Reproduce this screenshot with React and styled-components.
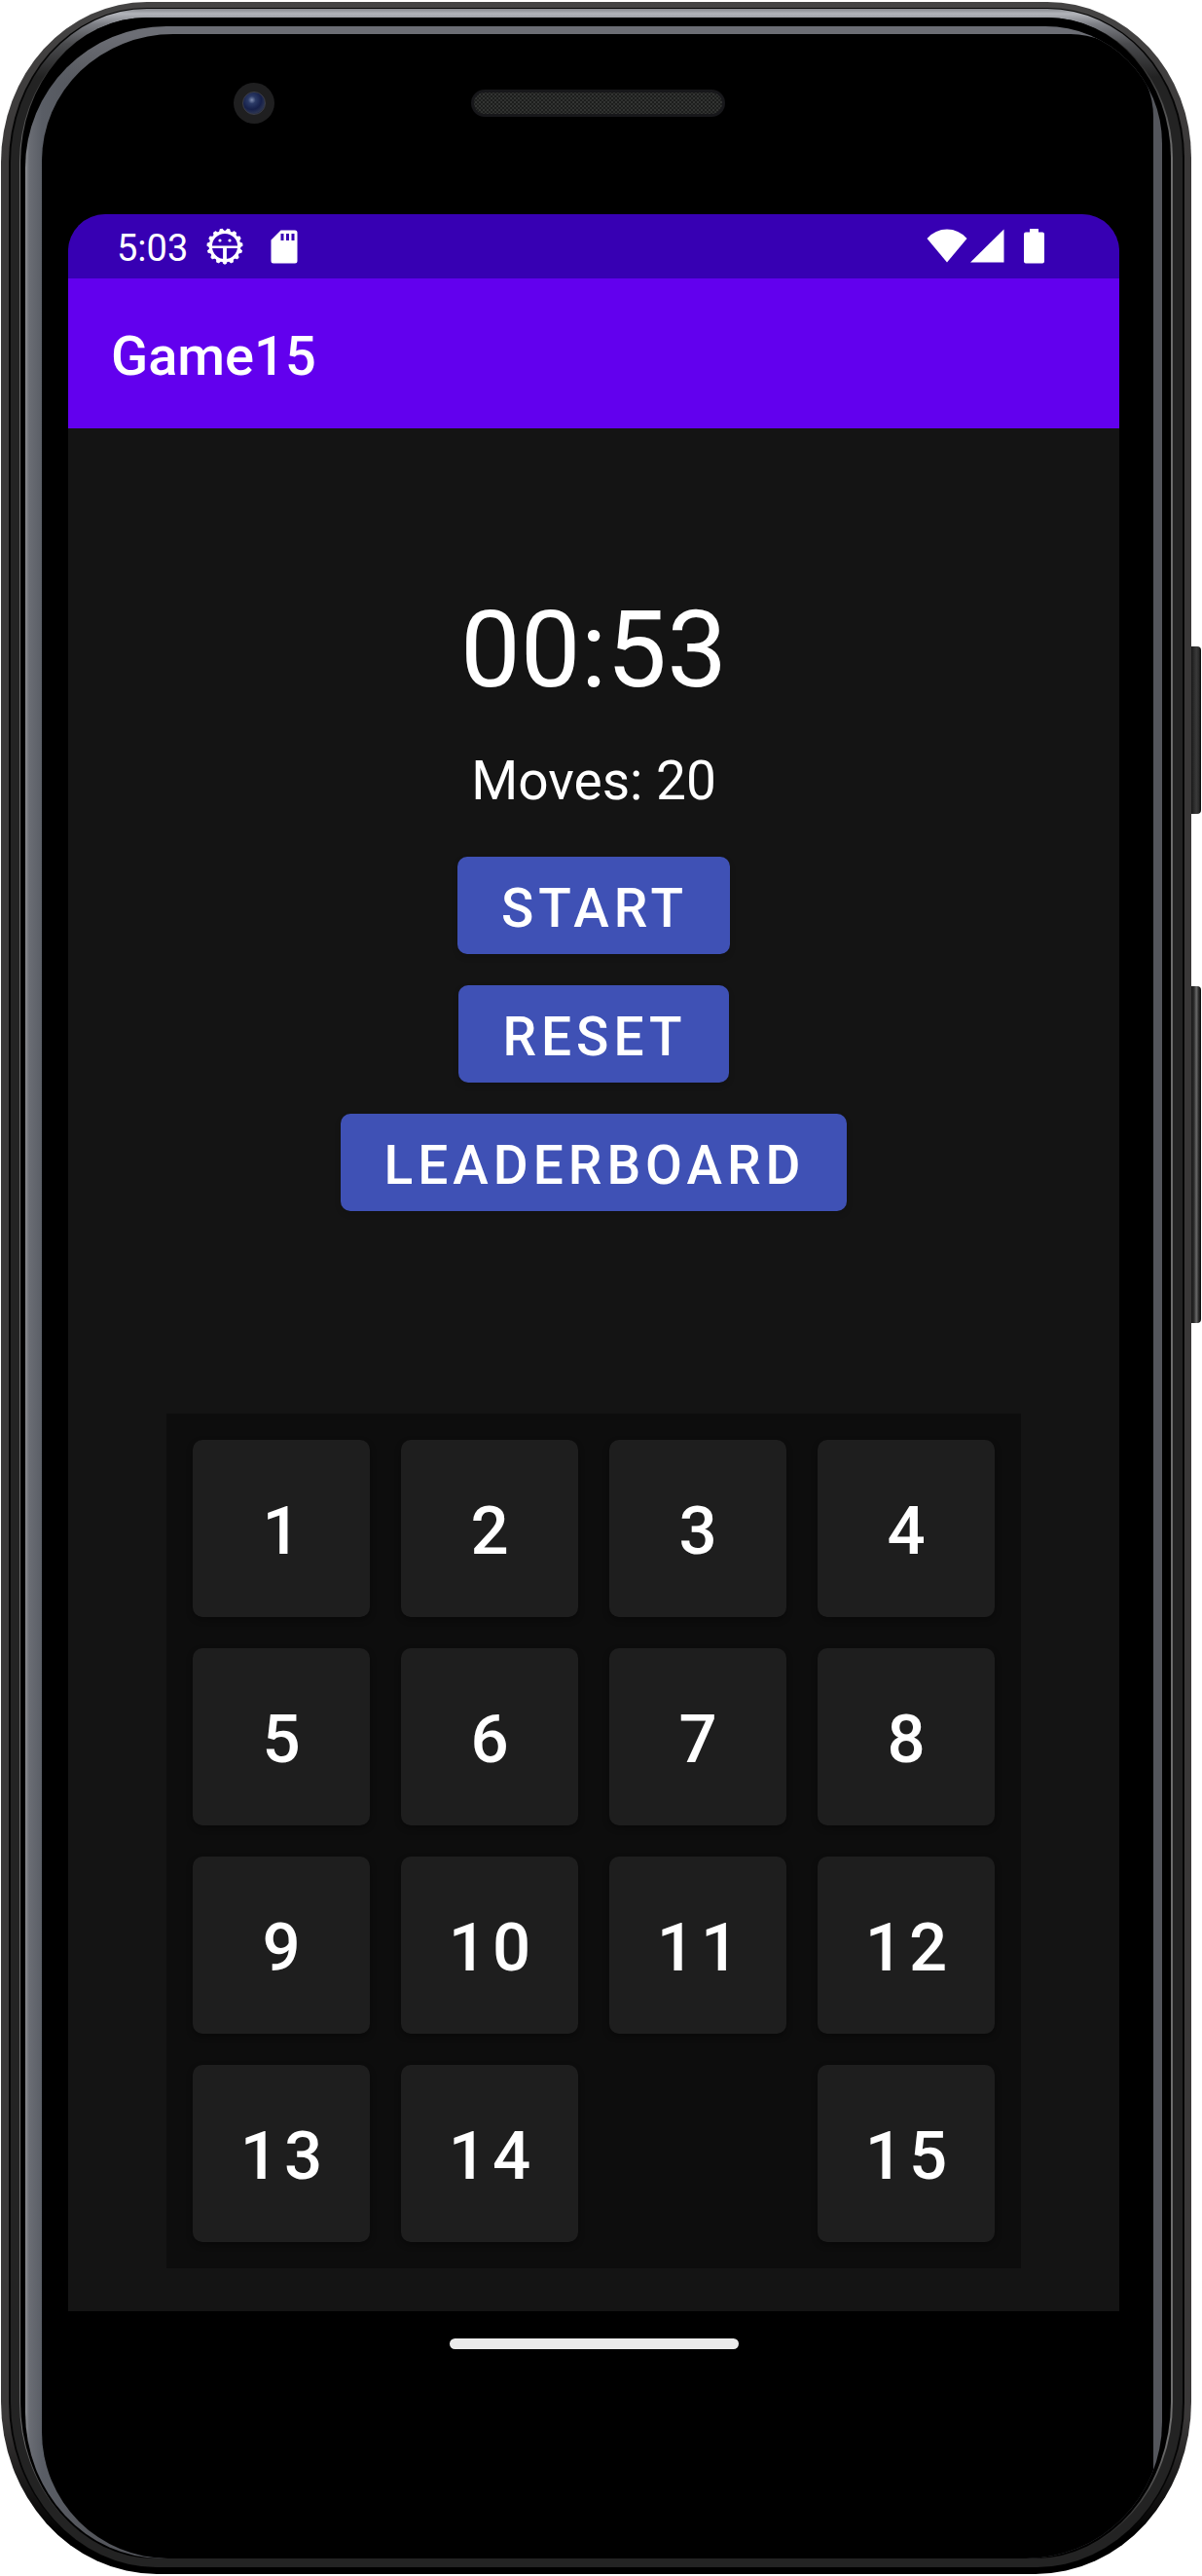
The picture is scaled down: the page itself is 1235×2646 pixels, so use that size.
import React from "react";
import styled, { createGlobalStyle } from "styled-components";

const GlobalStyle = createGlobalStyle`
  *, *::before, *::after { box-sizing: border-box; }
  body { margin: 0; background: #fff; font-family: Roboto, "Noto Sans", sans-serif; color: #fff; }
  button { font-family: inherit; border: 0; margin: 0; color: inherit; cursor: pointer; }
  h1, p { margin: 0; }
`;

/* ---------- device frame, from the outside in ---------- */

const Phone = styled.main`
  position: relative;
  padding: 2px 11px 2px 1px;
`;

const SideKey = styled.span`
  position: absolute;
  top: ${(p) => p.$top}px;
  right: 1px;
  width: 12px;
  height: ${(p) => p.$height}px;
  border-radius: 2px 4px 4px 2px;
  background: linear-gradient(to right, #0c0c0c, #2b2b2b 40%, ${(p) => p.$shine} 60%, #2b2b2b 80%, #080808);
`;

const Shell = styled.div`
  position: relative;
  padding: 6px 7px 7px 8px;
  border-radius: 150px 148px 160px 160px / 165px 160px 177px 177px;
  background: linear-gradient(to bottom, #454444, #3a3838 160px, #3a3838 calc(100% - 160px), #000 calc(100% - 40px));
`;

const Seam = styled.div`
  padding: 1px 2px 0 2px;
  border-radius: 142px 141px 152px 152px / 159px 154px 170px 170px;
  background: #050505;
`;

const Band = styled.div`
  padding: 9px 10px 9px 9px;
  border-radius: 140px 139px 150px 150px / 158px 153px 170px 170px;
  background: linear-gradient(to bottom, #85878c, #b2b4ba 5px, #7c7e84 16px, #4a4b4e 36px, #232323 70px);
`;

const Hairline = styled.div`
  padding: 0 2px 0 1px;
  border-radius: 131px 129px 141px 140px / 149px 144px 161px 161px;
  background: linear-gradient(to bottom, #111, #6e6e6e 140px, #6e6e6e calc(100% - 120px), #1a1a1a);
`;

const Gap = styled.div`
  padding: 9px 9px 0 5px;
  border-radius: 130px 127px 140px 138px / 149px 144px 161px 161px;
  background: #000;
`;

const Glare = styled.div`
  padding: 8px 9px 0 17px;
  overflow: hidden;
  border-radius: 145px 120px 140px 140px / 145px 120px 140px 150px;
  background:
    linear-gradient(to right, #8e9094, #6a6d74 4px, #5a5e66 17px, transparent 60px),
    linear-gradient(to bottom, #6c6e75, #6c6e75 10px, #54565c 60px);
`;

const Glass = styled.div`
  padding: 0 35px 188px 27px;
  border-radius: 135px 85px 90px 130px / 130px 85px 90px 130px;
  background: #000;
`;

const TopBezel = styled.div`
  display: grid;
  grid-template-columns: 1fr auto 1fr;
  align-items: center;
  margin: 0 -35px 0 -27px;
  padding: 50px 0 93px;
`;

const Camera = styled.div`
  display: grid;
  place-items: center;
  width: 42px;
  height: 42px;
  margin-left: 197px;
  border-radius: 50%;
  background: #1f1f20;
`;

const Lens = styled.div`
  width: 24px;
  height: 24px;
  border: 1px solid #3b3c44;
  border-radius: 50%;
  background: radial-gradient(circle at 40% 35%, #7f8db0 0, #2b3a66 20%, #16204a 50%, #2a3350 70%, #0a0d18);
`;

const Speaker = styled.div`
  width: 261px;
  height: 28px;
  border: 3px solid #17171a;
  border-radius: 14px;
  background:
    radial-gradient(circle, #6a6c6a 0, transparent 1px) 0 0 / 4px 4px,
    radial-gradient(circle, #5c5e5c 0, transparent 1px) 2px 2px / 4px 4px,
    #1d1e1d;
`;

/* ---------- screen ---------- */

const Screen = styled.div`
  overflow: hidden;
  border-radius: 38px 38px 0 0;
  background: #141414;
`;

const StatusBar = styled.div`
  display: flex;
  align-items: center;
  justify-content: space-between;
  height: 66px;
  padding: 0 77px 0 50px;
  background: #3700b3;
`;

const StatusGroup = styled.div`
  display: flex;
  align-items: center;
  gap: ${(p) => p.$gap}px;

  svg { display: block; fill: #fff; }
`;

const Clock = styled.span`
  padding-top: 3px;
  font-size: 38px;
  line-height: 44px;
`;

const AppBar = styled.header`
  display: flex;
  align-items: center;
  height: 154px;
  padding: 6px 44px 0;
  background: #6200ee;
`;

const Title = styled.h1`
  font-size: 56px;
  line-height: 64px;
  font-weight: 500;
`;

const Game = styled.section`
  display: flex;
  flex-direction: column;
  align-items: center;
  padding: 163px 0 44px;
`;

const Timer = styled.p`
  font-size: 110px;
  line-height: 130px;
`;

const Moves = styled.p`
  margin-top: 37px;
  font-size: 55px;
  line-height: 64px;
`;

const Actions = styled.div`
  display: flex;
  flex-direction: column;
  align-items: center;
  gap: 32px;
  padding: 46px 0 208px;
`;

const ActionButton = styled.button`
  height: 100px;
  padding: 6px 43px 0 45px;
  border-radius: 10px;
  background: #3f51b5;
  box-shadow: 0 3px 6px rgba(0, 0, 0, 0.15);
  font-size: 55px;
  line-height: 64px;
  font-weight: 500;
  letter-spacing: 5px;
  text-transform: uppercase;
`;

const Board = styled.div`
  display: grid;
  grid-template-columns: repeat(4, 1fr);
  gap: 32px;
  width: 100%;
  max-width: 878px;
  padding: 27px;
  background: #0d0d0d;
`;

const Tile = styled.button`
  aspect-ratio: 1;
  padding: 6px 0 0 6px;
  border-radius: 10px;
  background: #1e1e1e;
  box-shadow: 0 3px 6px rgba(0, 0, 0, 0.35);
  font-size: 69px;
  line-height: 80px;
  font-weight: 500;
  letter-spacing: 6px;
`;

const EmptyCell = styled.div`
  aspect-ratio: 1;
`;

const NavBar = styled.nav`
  display: flex;
  align-items: center;
  justify-content: center;
  height: 66px;
  background: #000;
`;

const HomePill = styled.button`
  width: 297px;
  height: 11px;
  padding: 0;
  border-radius: 6px;
  background: #ebebeb;
`;

/* ---------- status icons ---------- */

const TEETH = Array.from({ length: 15 }, (_, i) => i * 24 + 12);

function DebugIcon() {
  return (
    <svg width="38" height="38" viewBox="0 0 38 38" aria-hidden="true">
      {TEETH.map((a) => (
        <path
          key={a}
          d="M16.4 4.5 L17.9 1 H20.1 L21.6 4.5 Z"
          stroke="#fff"
          strokeLinejoin="round"
          transform={`rotate(${a} 19 19)`}
        />
      ))}
      <circle cx="19" cy="19" r="14.7" fill="none" stroke="#fff" strokeWidth="3.2" />
      <path d="M5 18.4 H33 V21 H20.9 V34 H17.1 V21 H5 Z" />
      <circle cx="14" cy="13" r="1.6" />
      <circle cx="24" cy="13" r="1.6" />
    </svg>
  );
}

function SdCardIcon() {
  return (
    <svg width="28" height="35" viewBox="0 0 28 35" aria-hidden="true">
      <path
        fillRule="evenodd"
        d="M10.5 0.5 H25 Q27.5 0.5 27.5 3 V32 Q27.5 34.5 25 34.5 H3 Q0.5 34.5 0.5 32 V10.5 Z M10.5 4 V11 H13.5 V4 Z M16 4 V11 H19 V4 Z M21.5 4 V11 H24.5 V4 Z"
      />
    </svg>
  );
}

function WifiIcon() {
  return (
    <svg width="42" height="36" viewBox="0 0 42 36" aria-hidden="true">
      <path d="M0.5 10 Q9 0.5 21 0.5 Q33 0.5 41.5 10 L21 34.5 Z" />
    </svg>
  );
}

function SignalIcon() {
  return (
    <svg width="35" height="36" viewBox="0 0 35 36" aria-hidden="true">
      <path d="M0 34.5 L34.5 0.5 V34.5 Z" />
    </svg>
  );
}

function BatteryIcon() {
  return (
    <svg width="21" height="36" viewBox="0 0 21 36" aria-hidden="true">
      <path d="M6 0 H15 V3.5 H19 Q21 3.5 21 5.5 V33.5 Q21 35.5 19 35.5 H2 Q0 35.5 0 33.5 V5.5 Q0 3.5 2 3.5 H6 Z" />
    </svg>
  );
}

const CELLS = [1, 2, 3, 4, 5, 6, 7, 8, 9, 10, 11, 12, 13, 14, null, 15];
const ACTIONS = ["Start", "Reset", "Leaderboard"];

export default function App() {
  return (
    <>
      <GlobalStyle />
      <Phone>
        <SideKey $top={664} $height={172} $shine="#3a3a3a" />
        <SideKey $top={1013} $height={346} $shine="#6a6a6a" />
        <Shell>
          <Seam>
            <Band>
              <Hairline>
                <Gap>
                  <Glare>
                    <Glass>
                      <TopBezel>
                        <Camera>
                          <Lens />
                        </Camera>
                        <Speaker />
                      </TopBezel>
                      <Screen>
                        <StatusBar>
                          <StatusGroup $gap={19}>
                            <Clock>5:03</Clock>
                            <StatusGroup $gap={28}>
                              <DebugIcon />
                              <SdCardIcon />
                            </StatusGroup>
                          </StatusGroup>
                          <StatusGroup $gap={20}>
                            <StatusGroup $gap={3}>
                              <WifiIcon />
                              <SignalIcon />
                            </StatusGroup>
                            <BatteryIcon />
                          </StatusGroup>
                        </StatusBar>
                        <AppBar>
                          <Title>Game15</Title>
                        </AppBar>
                        <Game>
                          <Timer>00:53</Timer>
                          <Moves>Moves: 20</Moves>
                          <Actions>
                            {ACTIONS.map((label) => (
                              <ActionButton key={label} type="button">
                                {label}
                              </ActionButton>
                            ))}
                          </Actions>
                          <Board>
                            {CELLS.map((n) =>
                              n === null ? (
                                <EmptyCell key="empty" />
                              ) : (
                                <Tile key={n} type="button">
                                  {n}
                                </Tile>
                              )
                            )}
                          </Board>
                        </Game>
                        <NavBar aria-label="System">
                          <HomePill type="button" aria-label="Home" />
                        </NavBar>
                      </Screen>
                    </Glass>
                  </Glare>
                </Gap>
              </Hairline>
            </Band>
          </Seam>
        </Shell>
      </Phone>
    </>
  );
}
